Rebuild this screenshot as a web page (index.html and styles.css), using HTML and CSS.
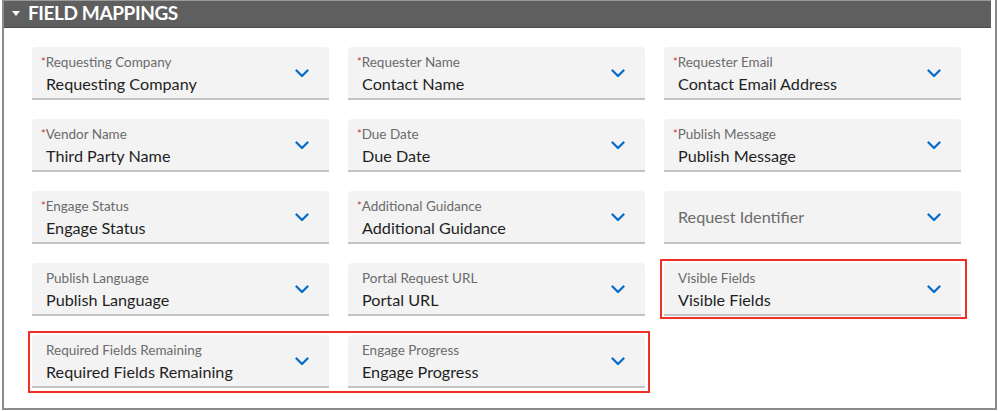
FILE: index.html
```html
<!DOCTYPE html>
<html lang="en">
<head>
  <meta charset="UTF-8">
  <title>Field Mappings</title>
  <link rel="stylesheet" href="styles.css">
</head>
<body>
  <div class="panel">
    <div class="panel-header">
      <span class="caret"></span>
      <h2>FIELD MAPPINGS</h2>
    </div>

    <div class="grid">
      <div class="field">
        <div class="field-text">
          <span class="label"><abbr>*</abbr>Requesting Company</span>
          <span class="value">Requesting Company</span>
        </div>
        <svg class="chevron" viewBox="0 0 14 9"><path d="M1.5 1.5 L7 7 L12.5 1.5"/></svg>
      </div>
      <div class="field">
        <div class="field-text">
          <span class="label"><abbr>*</abbr>Requester Name</span>
          <span class="value">Contact Name</span>
        </div>
        <svg class="chevron" viewBox="0 0 14 9"><path d="M1.5 1.5 L7 7 L12.5 1.5"/></svg>
      </div>
      <div class="field">
        <div class="field-text">
          <span class="label"><abbr>*</abbr>Requester Email</span>
          <span class="value">Contact Email Address</span>
        </div>
        <svg class="chevron" viewBox="0 0 14 9"><path d="M1.5 1.5 L7 7 L12.5 1.5"/></svg>
      </div>

      <div class="field">
        <div class="field-text">
          <span class="label"><abbr>*</abbr>Vendor Name</span>
          <span class="value">Third Party Name</span>
        </div>
        <svg class="chevron" viewBox="0 0 14 9"><path d="M1.5 1.5 L7 7 L12.5 1.5"/></svg>
      </div>
      <div class="field">
        <div class="field-text">
          <span class="label"><abbr>*</abbr>Due Date</span>
          <span class="value">Due Date</span>
        </div>
        <svg class="chevron" viewBox="0 0 14 9"><path d="M1.5 1.5 L7 7 L12.5 1.5"/></svg>
      </div>
      <div class="field">
        <div class="field-text">
          <span class="label"><abbr>*</abbr>Publish Message</span>
          <span class="value">Publish Message</span>
        </div>
        <svg class="chevron" viewBox="0 0 14 9"><path d="M1.5 1.5 L7 7 L12.5 1.5"/></svg>
      </div>

      <div class="field">
        <div class="field-text">
          <span class="label"><abbr>*</abbr>Engage Status</span>
          <span class="value">Engage Status</span>
        </div>
        <svg class="chevron" viewBox="0 0 14 9"><path d="M1.5 1.5 L7 7 L12.5 1.5"/></svg>
      </div>
      <div class="field">
        <div class="field-text">
          <span class="label"><abbr>*</abbr>Additional Guidance</span>
          <span class="value">Additional Guidance</span>
        </div>
        <svg class="chevron" viewBox="0 0 14 9"><path d="M1.5 1.5 L7 7 L12.5 1.5"/></svg>
      </div>
      <div class="field">
        <div class="field-text">
          <span class="placeholder">Request Identifier</span>
        </div>
        <svg class="chevron" viewBox="0 0 14 9"><path d="M1.5 1.5 L7 7 L12.5 1.5"/></svg>
      </div>

      <div class="field">
        <div class="field-text">
          <span class="label">Publish Language</span>
          <span class="value">Publish Language</span>
        </div>
        <svg class="chevron" viewBox="0 0 14 9"><path d="M1.5 1.5 L7 7 L12.5 1.5"/></svg>
      </div>
      <div class="field">
        <div class="field-text">
          <span class="label">Portal Request URL</span>
          <span class="value">Portal URL</span>
        </div>
        <svg class="chevron" viewBox="0 0 14 9"><path d="M1.5 1.5 L7 7 L12.5 1.5"/></svg>
      </div>
      <div class="field highlight">
        <div class="field-text">
          <span class="label">Visible Fields</span>
          <span class="value">Visible Fields</span>
        </div>
        <svg class="chevron" viewBox="0 0 14 9"><path d="M1.5 1.5 L7 7 L12.5 1.5"/></svg>
      </div>

      <div class="group highlight">
        <div class="field">
          <div class="field-text">
            <span class="label">Required Fields Remaining</span>
            <span class="value">Required Fields Remaining</span>
          </div>
          <svg class="chevron" viewBox="0 0 14 9"><path d="M1.5 1.5 L7 7 L12.5 1.5"/></svg>
        </div>
        <div class="field">
          <div class="field-text">
            <span class="label">Engage Progress</span>
            <span class="value">Engage Progress</span>
          </div>
          <svg class="chevron" viewBox="0 0 14 9"><path d="M1.5 1.5 L7 7 L12.5 1.5"/></svg>
        </div>
      </div>
    </div>
  </div>
</body>
</html>
```

FILE: styles.css
```css
body {
  margin: 0;
  font-family: Lato, 'Liberation Sans', sans-serif;
  background: #ffffff;
}
.panel {
  margin-left: 2px;
  width: 995px;
  height: 410px;
  border: 2px solid #8c8c8c;
  border-top: none;
  box-sizing: border-box;
  background: #ffffff;
}
.panel-header {
  display: flex;
  align-items: center;
  gap: 8px;
  height: 28px;
  margin-right: 4px;
  padding-left: 8px;
  background: #5f5f5f;
  border-top: 1px solid #9a9a9a;
  border-bottom: 1px solid #4a4a4a;
  box-sizing: border-box;
}
.caret {
  width: 0;
  height: 0;
  border-left: 4px solid transparent;
  border-right: 4px solid transparent;
  border-top: 5px solid #ffffff;
  margin-top: -2px;
}
.panel-header h2 {
  margin: 0;
  color: #ffffff;
  font-size: 19px;
  font-weight: 700;
  letter-spacing: -0.4px;
  line-height: 1;
  margin-top: -3px;
}
.grid {
  display: grid;
  grid-template-columns: repeat(3, 297px);
  grid-auto-rows: 53px;
  column-gap: 19px;
  row-gap: 19px;
  padding: 19px 0 0 28px;
}
.field {
  position: relative;
  display: flex;
  align-items: center;
  justify-content: space-between;
  height: 53px;
  padding: 2px 20px 0 14px;
  background: #f3f3f3;
  border-bottom: 2px solid #c4c4c4;
  border-radius: 4px 4px 0 0;
  box-sizing: border-box;
}
.field-text {
  display: flex;
  flex-direction: column;
}
.label {
  font-size: 13.5px;
  color: #6b6b6b;
  line-height: 16px;
}
.label abbr {
  color: #c23934;
  text-decoration: none;
  font-size: 11px;
  margin-left: -5px;
  vertical-align: 1px;
}
.value {
  font-size: 16.2px;
  color: #1f1f1f;
  line-height: 20px;
  margin-top: 4px;
}
.placeholder {
  font-size: 16.2px;
  color: #6b6b6b;
  margin-top: -3px;
}
.chevron {
  width: 14px;
  height: 9px;
  flex-shrink: 0;
  fill: none;
  stroke: #0b6fc9;
  stroke-width: 2.4;
  stroke-linecap: round;
  stroke-linejoin: round;
}
.group {
  position: relative;
  grid-column: span 2;
  display: grid;
  grid-template-columns: repeat(2, 297px);
  column-gap: 19px;
}
.highlight::after {
  content: "";
  position: absolute;
  top: -4px;
  left: -4px;
  right: -5px;
  bottom: -5px;
  border: 2px solid #ee3124;
  pointer-events: none;
}
.field.highlight::after {
  right: -6px;
}
```
